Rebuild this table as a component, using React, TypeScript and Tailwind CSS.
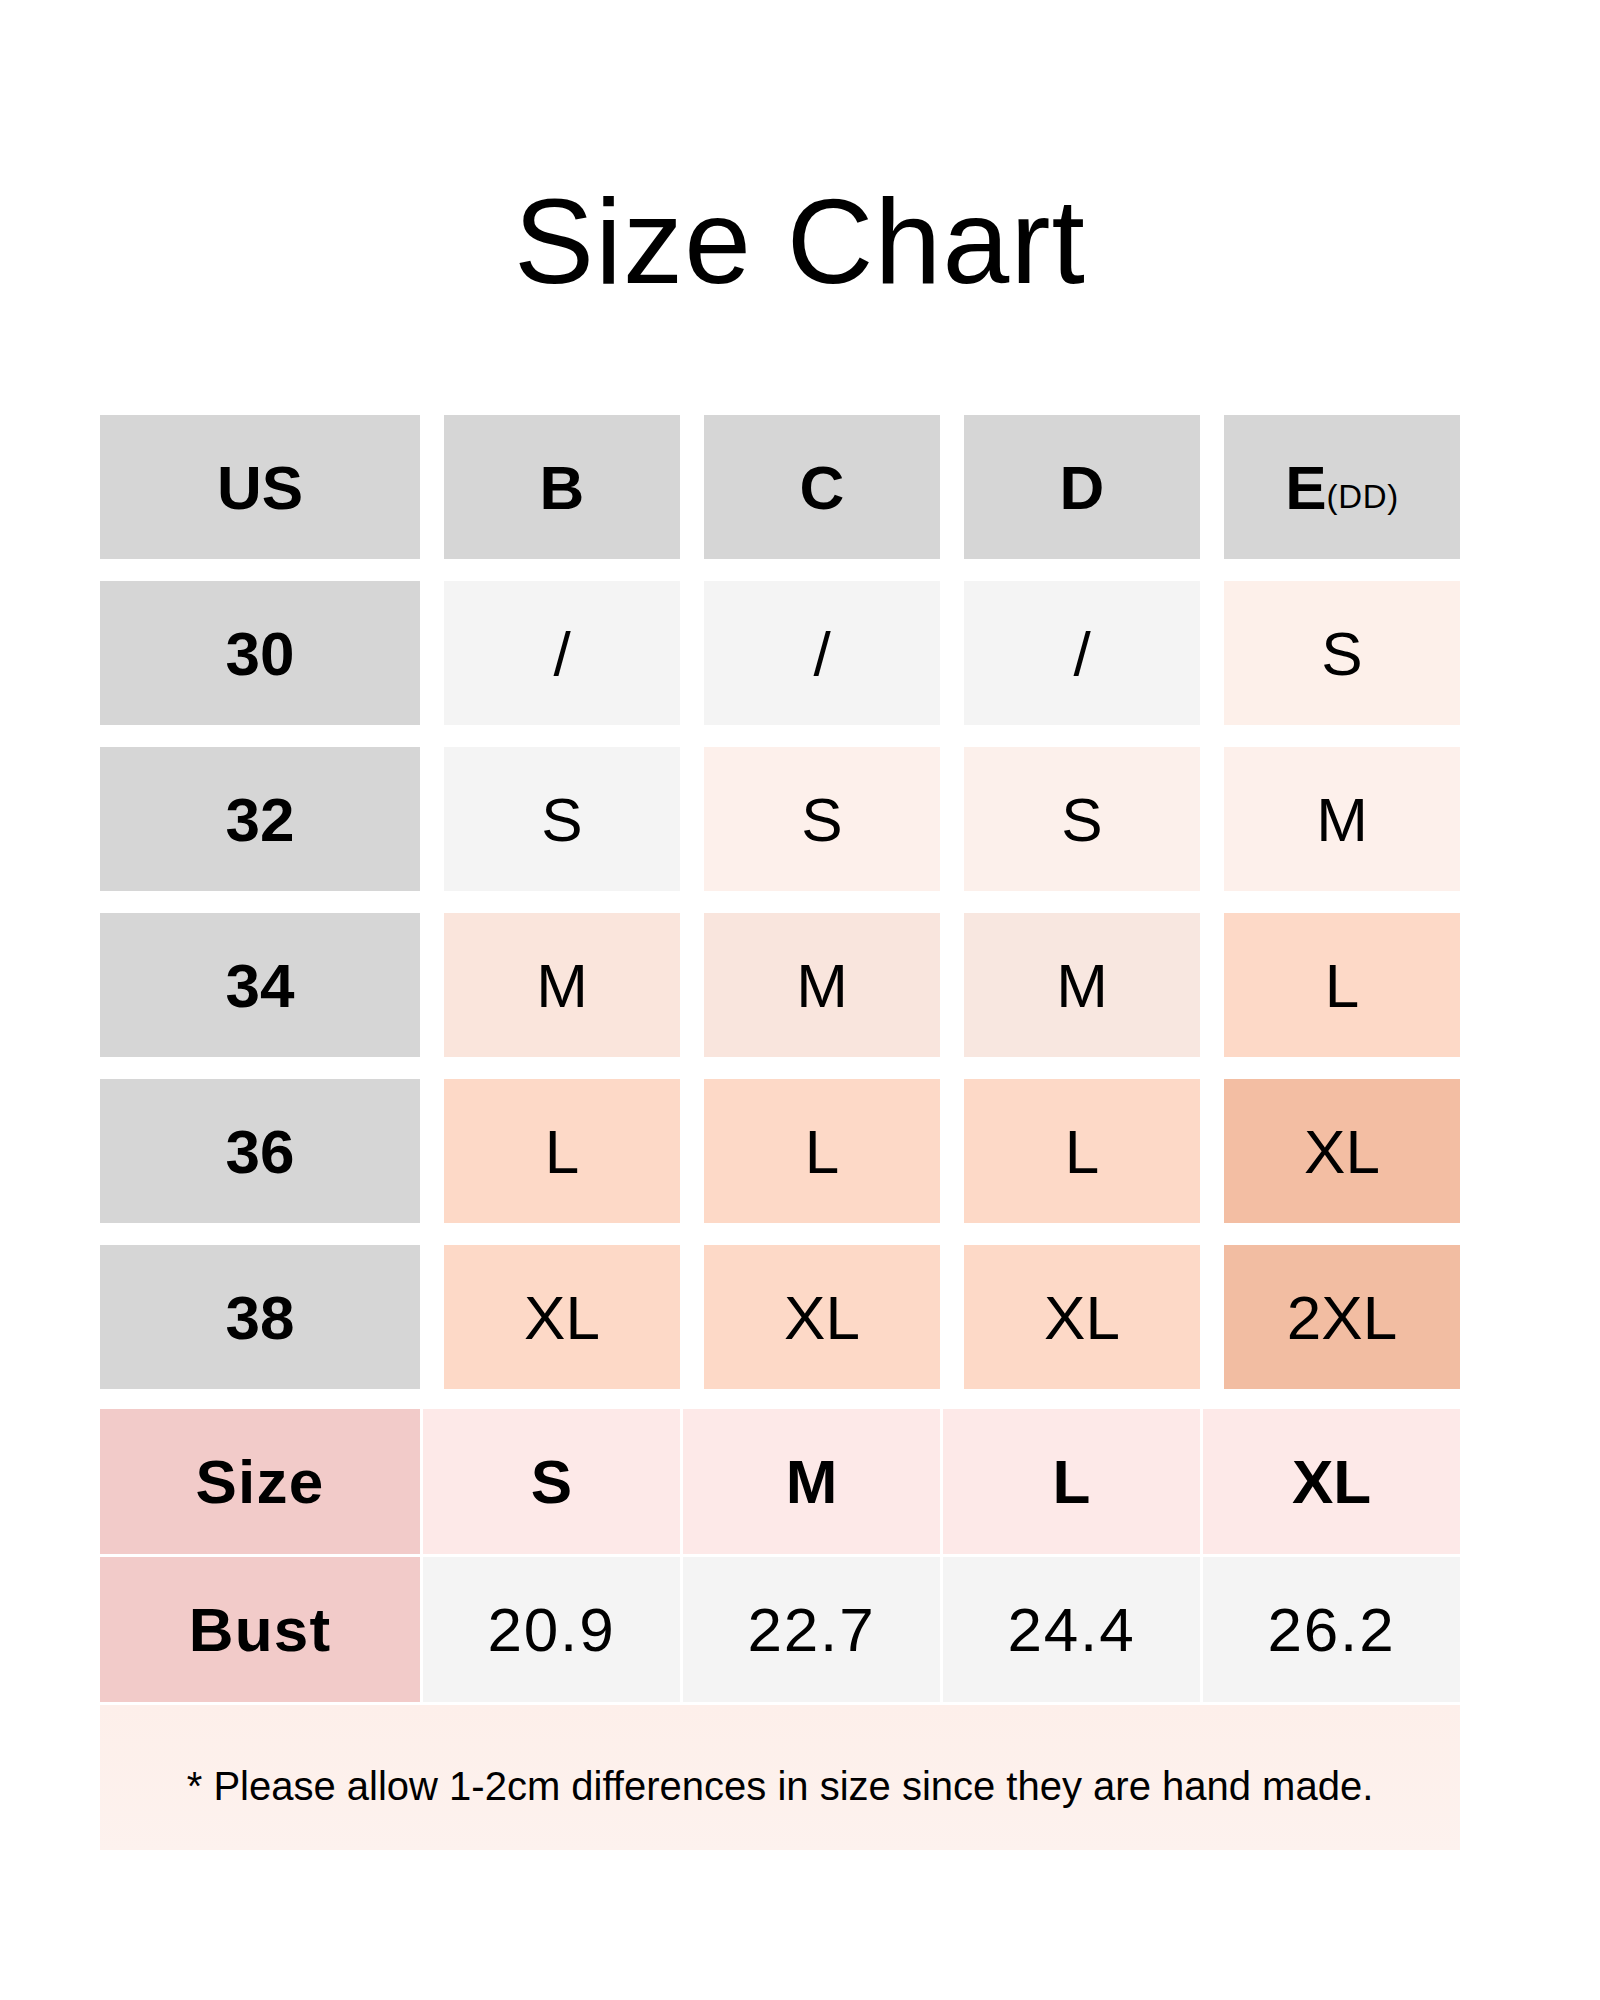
const sizeRows = [
  { us: '30', cells: [['/', 'bg-[#f4f4f4]'], ['/', 'bg-[#f4f4f4]'], ['/', 'bg-[#f4f4f4]'], ['S', 'bg-[#fdf0ea]']] },
  { us: '32', cells: [['S', 'bg-[#f4f4f4]'], ['S', 'bg-[#fdf0eb]'], ['S', 'bg-[#fcf0eb]'], ['M', 'bg-[#fdf0eb]']] },
  { us: '34', cells: [['M', 'bg-[#fae5dc]'], ['M', 'bg-[#f9e5dd]'], ['M', 'bg-[#f8e7e0]'], ['L', 'bg-[#fdd9c7]']] },
  { us: '36', cells: [['L', 'bg-[#fdd9c7]'], ['L', 'bg-[#fdd9c7]'], ['L', 'bg-[#fdd9c7]'], ['XL', 'bg-[#f3bea3]']] },
  { us: '38', cells: [['XL', 'bg-[#fdd9c7]'], ['XL', 'bg-[#fdd9c7]'], ['XL', 'bg-[#fdd9c7]'], ['2XL', 'bg-[#f2bda2]']] },
];

const bust = [
  ['S', '20.9'],
  ['M', '22.7'],
  ['L', '24.4'],
  ['XL', '26.2'],
];

function Cell({ children, className }: { children: React.ReactNode; className: string }) {
  return <div className={`h-[144px] pt-[2px] flex items-center justify-center ${className}`}>{children}</div>;
}

export default function App() {
  return (
    <div className="w-[1600px] h-[2000px] bg-white text-black font-['Liberation_Sans',Arial,sans-serif]">
      <h1 className="pt-[181px] text-center text-[120px] leading-none tracking-[0.01em]">Size Chart</h1>

      <div className="mt-[114px] mx-[100px] w-[1360px]">
        {/* cup / band grid */}
        <div className="grid grid-cols-[320px_repeat(4,236px)] gap-x-[24px] gap-y-[22px] text-[62px] leading-none">
          <Cell className="bg-[#d6d6d6] font-bold">US</Cell>
          <Cell className="bg-[#d6d6d6] font-bold">B</Cell>
          <Cell className="bg-[#d6d6d6] font-bold">C</Cell>
          <Cell className="bg-[#d6d6d6] font-bold">D</Cell>
          <Cell className="bg-[#d6d6d6]">
            <span className="font-bold">E</span>
            <span className="text-[33px] tracking-[0.02em] self-center pt-[16px]">(DD)</span>
          </Cell>
          {sizeRows.map((row) => (
            <>
              <Cell key={row.us} className="bg-[#d6d6d6] font-bold">{row.us}</Cell>
              {row.cells.map(([v, bg], i) => (
                <Cell key={row.us + i} className={bg}>{v}</Cell>
              ))}
            </>
          ))}
        </div>

        {/* size / bust table */}
        <div className="mt-[20px] grid grid-cols-[320px_repeat(4,1fr)] gap-[3px] text-[62px] leading-none">
          <div className="h-[145px] flex items-center justify-center bg-[#f2cbc9] font-bold tracking-[0.02em]">Size</div>
          {bust.map(([s]) => (
            <div key={s} className="h-[145px] flex items-center justify-center bg-[#fde9e8] font-bold">{s}</div>
          ))}
          <div className="h-[145px] flex items-center justify-center bg-[#f2cbc9] font-bold tracking-[0.02em]">Bust</div>
          {bust.map(([s, v]) => (
            <div key={s} className="h-[145px] flex items-center justify-center bg-[#f4f4f4] tracking-[0.03em]">{v}</div>
          ))}
          <div className="col-span-5 h-[145px] flex items-center justify-center pt-[16px] bg-gradient-to-b from-[#fdefea] to-[#fdf2ee] text-[40px]">
            * Please allow 1-2cm differences in size since they are hand made.
          </div>
        </div>
      </div>
    </div>
  );
}
